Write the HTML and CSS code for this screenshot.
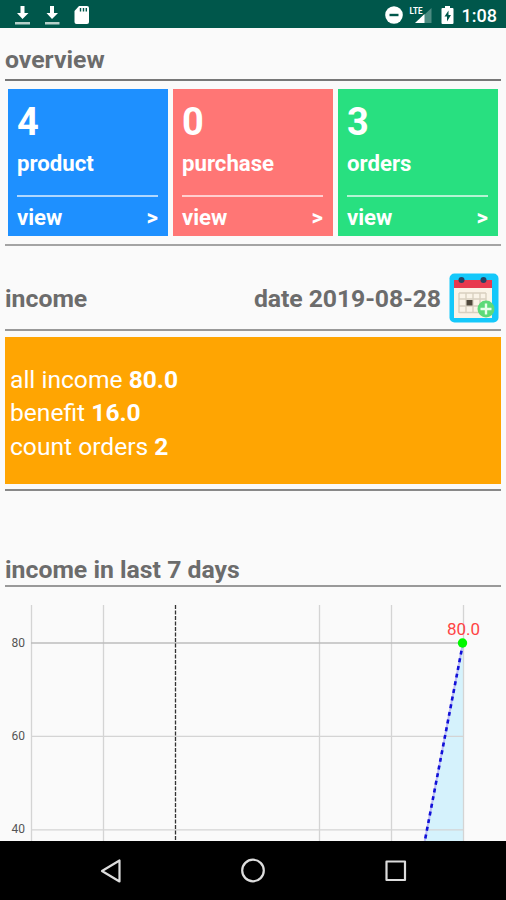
FILE: index.html
```html
<!DOCTYPE html>
<html lang="en">
<head>
  <meta charset="UTF-8">
  <meta name="viewport" content="width=device-width, initial-scale=1.0">
  <title>Overview</title>
  <link rel="stylesheet" href="styles.css">
</head>
<body>
  <header class="status-bar">
    <svg class="status-icons" width="80" height="28" viewBox="0 0 80 28">
      <g fill="#fff">
        <path d="M5.500 6h4v7h4L7.500 19 2 13h3.500z"/>
        <path d="M35 6h4v7h4L37 19l-5.500-6H35z"/>
        <path d="M64 6h8q2 0 2 2v14q0 2-2 2H61.500q-2 0-2-2V11z"/>
      </g>
      <path d="M0 23.200h15M30 23.200h14.500" stroke="#b5d0ca" stroke-width="2.600"/>
      <path d="M65.500 8v3.500M68.500 8v3.500M71.300 8v3.500" stroke="#00574b" stroke-width="1.400"/>
    </svg>
    <div class="status-right">
      <svg width="72" height="28" viewBox="0 0 72 28">
        <circle cx="9" cy="15" r="8.800" fill="#fff"/>
        <path d="M4.500 15h9" stroke="#00574b" stroke-width="2.400"/>
        <path d="M46.500 8v15H30.500z" fill="#4c8b81"/>
        <path d="M39.500 14v9h-9.500z" fill="#fff"/>
        <text class="lte" x="24.500" y="13.500" textLength="13" lengthAdjust="spacingAndGlyphs">LTE</text>
        <path d="M60 6h5v2h2.500q1 0 1 1v14q0 1-1 1h-10q-1 0-1-1V9q0-1 1-1H60z" fill="#fff"/>
        <path d="M63.500 10.500L59.500 16.500h2.500v5l4-6.500h-2.500z" fill="#00574b"/>
      </svg>
      <span class="clock">1:08</span>
    </div>
  </header>

  <main class="content">
    <h1 class="title overview-title">overview</h1>
    <div class="cards">
      <div class="card blue">
        <div class="number">4</div>
        <div class="name">product</div>
        <a class="view"><span>view</span><span>&gt;</span></a>
      </div>
      <div class="card red">
        <div class="number">0</div>
        <div class="name">purchase</div>
        <a class="view"><span>view</span><span>&gt;</span></a>
      </div>
      <div class="card green">
        <div class="number">3</div>
        <div class="name">orders</div>
        <a class="view"><span>view</span><span>&gt;</span></a>
      </div>
    </div>

    <div class="income-header">
      <h2 class="title">income</h2>
      <span class="title date">date 2019-08-28</span>
      <svg class="calendar" width="50" height="50" viewBox="0 0 50 50">
        <rect x=".5" y=".5" width="49" height="49" rx="5" fill="#14c8fa"/>
        <path d="M5 14h38v31H5z" fill="#faf3e7"/>
        <path d="M5 7h38v8H5z" fill="#e8394d"/>
        <circle cx="12.500" cy="7" r="3" fill="#264362"/>
        <circle cx="34.500" cy="7" r="3" fill="#264362"/>
        <path d="M10 20h27M10 26h27M10 33h27M10 39.500h27M10 20v20M17 20v20M24 20v20M31 20v20M37 20v20" stroke="#d9d0c0" stroke-width="1.400"/>
        <rect x="17.500" y="27" width="6" height="5.500" fill="#50483b"/>
        <circle cx="37" cy="36" r="8.500" fill="#5cda79"/>
        <path d="M31.500 36h11M37 30.500v11" stroke="#e8ffec" stroke-width="2.400"/>
      </svg>
    </div>

    <div class="income-wrap">
      <div class="income-box">
        <p>all income <b>80.0</b></p>
        <p>benefit <b>16.0</b></p>
        <p>count orders <b>2</b></p>
      </div>
    </div>

    <h2 class="title chart-title">income in last 7 days</h2>
    <svg class="chart" width="506" height="254" viewBox="0 587 506 254">
      <path d="M463 643V841H425z" fill="#d5f2fc"/>
      <g stroke="#d4d4d4" stroke-width="1.300">
        <path d="M31.500 605v236M103.500 605v236M319.500 605v236M391.500 605v236M463.500 605v236"/>
        <path d="M31 736.300h432M31 829.800h432"/>
      </g>
      <path d="M31 643h432" stroke="#bcbcbc" stroke-width="1.300"/>
      <path d="M175.500 605v236" stroke="#333" stroke-width="1.300" stroke-dasharray="4 1.500"/>
      <path d="M463 643L424.800 841" stroke="#bcbcf5" stroke-width="2"/>
      <path d="M463 643L424.800 841" stroke="#1010d8" stroke-width="2.600" stroke-dasharray="4 3.800"/>
      <circle cx="462.500" cy="643" r="4.700" fill="#00f800"/>
      <g class="axis">
        <text x="25" y="646.500">80</text>
        <text x="25" y="740">60</text>
        <text x="25" y="833.300">40</text>
      </g>
      <text class="point-label" x="463.500" y="634.500">80.0</text>
    </svg>
  </main>

  <nav class="nav-bar">
    <svg width="506" height="59" viewBox="0 0 506 59" fill="none" stroke="#ddd" stroke-width="2.200" stroke-linejoin="round">
      <path d="M119.500 19.500v21L102 30z"/>
      <circle cx="253" cy="29.500" r="10.800"/>
      <rect x="386.500" y="20.500" width="18.500" height="18.500"/>
    </svg>
  </nav>
</body>
</html>
```
FILE: styles.css
```css
* {
  box-sizing: border-box;
}

html, body {
  height: 100%;
}

body {
  margin: 0;
  display: flex;
  flex-direction: column;
  overflow: hidden;
  background: #fafafa;
  font-family: Roboto, sans-serif;
}

svg {
  display: block;
}

.status-bar {
  height: 28px;
  flex: none;
  display: flex;
  justify-content: space-between;
  padding: 0 9px 0 15px;
  background: #00574b;
  color: #fff;
}

.status-right {
  display: flex;
  gap: 5px;
}

.clock {
  font-size: 18px;
  font-weight: 500;
  line-height: 31px;
}

.lte {
  font-size: 9.500px;
  font-weight: bold;
  fill: #fff;
}

.content {
  flex: 1;
  overflow: hidden;
}

.title {
  margin: 0;
  color: #6c6c6c;
  font-size: 24.800px;
  font-weight: bold;
  line-height: 28px;
}

/* Section headings with a rule below */
.overview-title,
.chart-title {
  margin: 0 5px;
  border-bottom: 2px solid #777;
}

.overview-title {
  height: 53px;
  padding-top: 18px;
}

.cards {
  margin: 0 5px;
  height: 165px;
  padding: 8px 3px;
  display: grid;
  grid-template-columns: repeat(3, 1fr);
  gap: 5px;
  border-bottom: 2px solid #a4a4a4;
}

.card {
  height: 147px;
  padding: 11px 10px 0 9px;
  color: #fff;
  font-weight: bold;
  font-size: 22.200px;
}

.blue {
  background: #1e90ff;
}

.red {
  background: #ff7675;
}

.green {
  background: #28e080;
}

.number {
  font-size: 38px;
  line-height: 44px;
}

.name {
  height: 51px;
  line-height: 38px;
}

.view {
  display: flex;
  justify-content: space-between;
  border-top: 2px solid rgba(255, 255, 255, 0.65);
  line-height: 41px;
}

.income-header {
  margin: 0 5px;
  height: 85px;
  padding: 27px 2px 0 0;
  display: flex;
  align-items: flex-start;
  border-bottom: 2px solid #999;
}

.income-header .title {
  line-height: 51px;
}

.income-header .date {
  margin-left: auto;
  margin-right: 8px;
  letter-spacing: -0.1px;
}

.income-wrap {
  margin: 0 5px;
  height: 160px;
  padding-top: 6px;
  border-bottom: 2px solid #888;
}

.income-box {
  height: 147px;
  padding: 26px 5px;
  background: #ffa502;
  color: #fff;
  font-size: 24.600px;
  line-height: 33.300px;
}

.income-box p {
  margin: 0;
}

.chart-title {
  height: 96px;
  padding-top: 65px;
  border-color: #999;
}

.axis {
  font-size: 12px;
  fill: #555;
  text-anchor: end;
}

.point-label {
  font-size: 17px;
  fill: #ff4444;
  text-anchor: middle;
}

.nav-bar {
  height: 59px;
  flex: none;
  background: #000;
}
```
